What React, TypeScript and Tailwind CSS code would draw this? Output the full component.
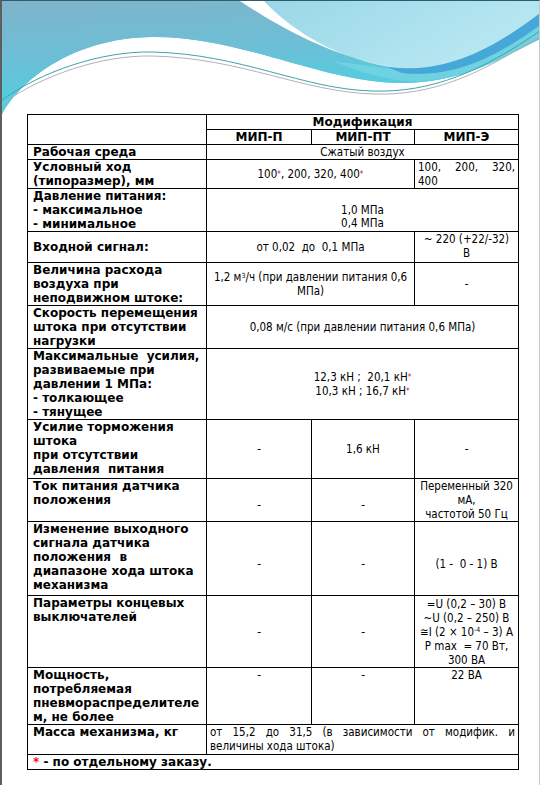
import React from 'react';

const label = "font-['DejaVu_Sans',sans-serif] font-bold text-[12px] leading-[14px] align-top text-left px-[5px] border border-black";
const val = "font-['DejaVu_Sans_Condensed','DejaVu_Sans',sans-serif] text-[11.5px] leading-[14px] text-center align-middle px-[3px] border border-black";
const head = "font-['DejaVu_Sans',sans-serif] font-bold text-[12px] leading-[14px] text-center align-middle border border-black";

function Star() {
  return <sup className="text-[#c0142b] text-[8px] relative -top-[1px]">*</sup>;
}

function Waves() {
  return (
    <svg width="538" height="113" viewBox="0 0 538 113" className="block">
      <defs>
        <linearGradient id="wvMainGrad" x1="0" y1="0" x2="0.25" y2="1">
          <stop offset="0" stopColor="#7fb4ca" />
          <stop offset="0.5" stopColor="#6cbfd6" />
          <stop offset="1" stopColor="#48d4e4" />
        </linearGradient>
        <linearGradient id="wvLightGrad" x1="0" y1="0" x2="1" y2="0.4">
          <stop offset="0" stopColor="#98d6e6" />
          <stop offset="1" stopColor="#b8e8f2" />
        </linearGradient>
      </defs>
      <path d="M0,113 C18,80 70,37 150,36 C240,35 320,82 400,82 C460,82 500,57 538,38 V0 H0 Z" fill="#76bdd4" />
      <path d="M0,113 C18,80 70,37 150,36 C240,35 320,82 400,82 C460,82 500,57 538,38 V0 H0 Z" fill="url(#wvMainGrad)" />
      <path d="M330,60 C370,76 395,80 410,80 C465,80 505,55 538,36 V18 C500,45 450,72 390,68 Z" fill="#6fd2e3" />
      <path d="M245,0 C290,30 340,60 398,67 C455,72 500,42 538,14 V0 Z" fill="#a6dce9" />
      <path d="M245,0 C290,30 340,60 398,67 C455,72 500,42 538,14 V0 Z" fill="url(#wvLightGrad)" />
      <path d="M238,0 C280,28 335,58 396,67 C340,60 292,32 262,0 Z" fill="#ffffff" />
      <path d="M385,66 C445,74 495,45 538,12 V24 C500,52 455,78 400,72 Z" fill="#45a8d8" />
      <path d="M0,99 C40,70 100,50 150,51 C240,53 300,88 370,90 C430,92 480,70 538,30" fill="none" stroke="#3aa6ab" strokeWidth="1" />
      <path d="M0,103 C40,74 100,54 150,55 C240,57 300,91 372,93 C430,95 480,73 538,34" fill="none" stroke="#b7aebb" strokeWidth="1" />
    </svg>
  );
}

export default function App() {
  return (
    <div className="w-[540px] h-[785px] bg-white border-l-2 border-l-[#5e5e5e] border-t border-t-[#2f5b6b] border-r border-r-[#c9c9c9] overflow-hidden">
      <Waves />
      <table className="ml-[25px] w-[491px] table-fixed border-collapse text-black">
        <colgroup>
          <col className="w-[179px]" />
          <col className="w-[105px]" />
          <col className="w-[103px]" />
          <col className="w-[104px]" />
        </colgroup>
        <tbody>
          <tr className="h-[15px]">
            <td rowSpan={2} className="border border-black"></td>
            <td colSpan={3} className={head}>Модификация</td>
          </tr>
          <tr className="h-[15px]">
            <td className={head}>МИП-П</td>
            <td className={head}>МИП-ПТ</td>
            <td className={head}>МИП-Э</td>
          </tr>
          <tr className="h-[15px]">
            <td className={label}>Рабочая среда</td>
            <td colSpan={3} className={val}>Сжатый воздух</td>
          </tr>
          <tr className="h-[29px]">
            <td className={label}>Условный ход<br />(типоразмер), мм</td>
            <td colSpan={2} className={val}>100<Star />, 200, 320, 400<Star /></td>
            <td className={val + ' !text-justify !align-top'}>100, 200, 320, 400</td>
          </tr>
          <tr className="h-[43px]">
            <td className={label}>Давление питания:<br />- максимальное<br />- минимальное</td>
            <td colSpan={3} className={val + ' !align-bottom !leading-[13px] pb-[1px]'}>1,0 МПа<br />0,4 МПа</td>
          </tr>
          <tr className="h-[31px]">
            <td className={label + ' !align-middle'}>Входной сигнал:</td>
            <td colSpan={2} className={val}>от 0,02 &nbsp;до &nbsp;0,1 МПа</td>
            <td className={val + ' !align-top'}>~ 220 (+22/-32)<br />В</td>
          </tr>
          <tr className="h-[43px]">
            <td className={label}>Величина расхода<br />воздуха при<br />неподвижном штоке:</td>
            <td colSpan={2} className={val}>1,2 м<sup className="text-[7px]">3</sup>/ч (при давлении питания 0,6<br />МПа)</td>
            <td className={val}>-</td>
          </tr>
          <tr className="h-[42px]">
            <td className={label}>Скорость перемещения<br />штока при отсутствии<br />нагрузки</td>
            <td colSpan={3} className={val}>0,08 м/с (при давлении питания 0,6 МПа)</td>
          </tr>
          <tr className="h-[71px]">
            <td className={label}>Максимальные &nbsp;усилия,<br />развиваемые при<br />давлении 1 МПа:<br />- толкающее<br />- тянущее</td>
            <td colSpan={3} className={val}>12,3 кН ; &nbsp;20,1 кН<Star /><br />10,3 кН ; 16,7 кН<Star /></td>
          </tr>
          <tr className="h-[59px]">
            <td className={label}>Усилие торможения<br />штока<br />при отсутствии<br />давления &nbsp;питания</td>
            <td className={val}>-</td>
            <td className={val}>1,6 кН</td>
            <td className={val}>-</td>
          </tr>
          <tr className="h-[43px]">
            <td className={label}>Ток питания датчика<br />положения</td>
            <td className={val + ' pt-[10px]'}>-</td>
            <td className={val + ' pt-[10px]'}>-</td>
            <td className={val + ' !px-0'}>Переменный 320<br />мА,<br />частотой 50 Гц</td>
          </tr>
          <tr className="h-[74px]">
            <td className={label}>Изменение выходного<br />сигнала датчика<br />положения &nbsp;в<br />диапазоне хода штока<br />механизма</td>
            <td className={val + ' pt-[10px]'}>-</td>
            <td className={val + ' pt-[10px]'}>-</td>
            <td className={val + ' pt-[10px]'}>(1 - &nbsp;0 - 1) В</td>
          </tr>
          <tr className="h-[72px]">
            <td className={label}>Параметры концевых<br />выключателей</td>
            <td className={val}>-</td>
            <td className={val}>-</td>
            <td className={val + ' !px-0 whitespace-nowrap'}>=U (0,2 – 30) В<br />~U (0,2 – 250) В<br />≅I (2 × 10<sup className="text-[7px]">-4</sup> – 3) А<br />P max &nbsp;= 70 Вт,<br />300 ВА</td>
          </tr>
          <tr className="h-[57px]">
            <td className={label}>Мощность,<br />потребляемая<br />пневмораспределителе<br />м, не более</td>
            <td className={val + ' !align-top'}>-</td>
            <td className={val + ' !align-top'}>-</td>
            <td className={val + ' !align-top'}>22 ВА</td>
          </tr>
          <tr className="h-[30px]">
            <td className={label}>Масса механизма, кг</td>
            <td colSpan={3} className={val + ' !text-justify !align-top'}>от 15,2 до 31,5 (в зависимости от модифик. и величины хода штока)</td>
          </tr>
          <tr className="h-[15px]">
            <td colSpan={4} className={label}><span className="text-[#e8112d]">*</span> - по отдельному заказу.</td>
          </tr>
        </tbody>
      </table>
    </div>
  );
}
